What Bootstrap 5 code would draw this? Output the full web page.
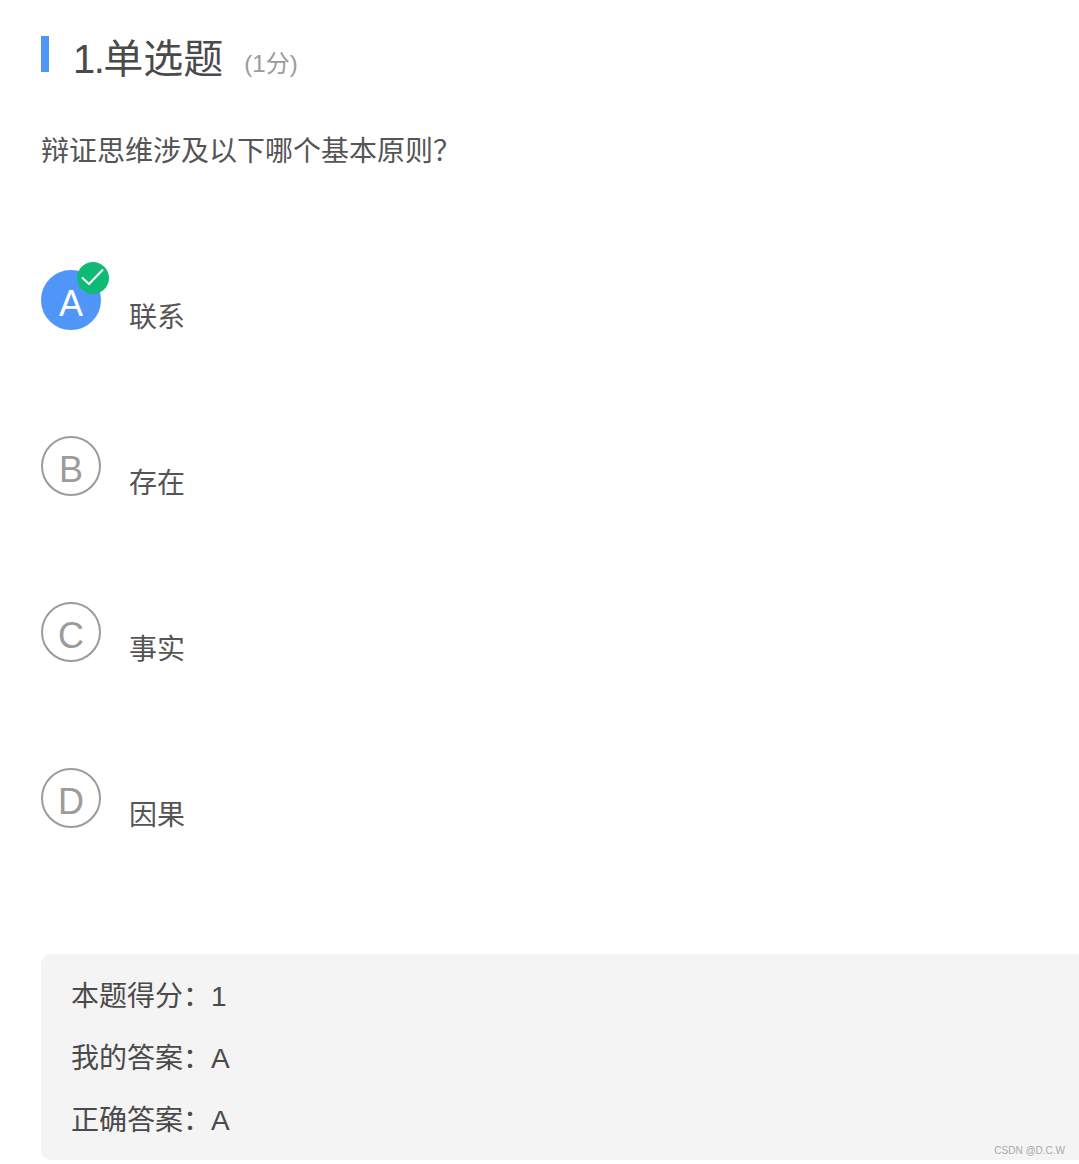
<!DOCTYPE html>
<html lang="zh">
<head>
  <meta charset="UTF-8">
  <meta name="viewport" content="width=device-width, initial-scale=1.0">
  <title>单选题</title>
  <link href="https://cdn.jsdelivr.net/npm/bootstrap@5.3.0/dist/css/bootstrap.min.css" rel="stylesheet">
  <style>
    body {
      font-family: "Liberation Sans", "Noto Sans CJK SC", sans-serif;
      color: #4a4a4a;
      overflow: hidden;
    }
    .quiz-page {
      position: relative;
      height: 1164px;
      padding: 36px 0 0 41px;
    }
    .quiz-title {
      height: 36px;
    }
    .title-bar {
      width: 8px;
      height: 36px;
      background: #5096f8;
      margin-right: 24px;
    }
    .title-text {
      font-size: 40px;
      line-height: 44px;
      margin: 1px 0 0;
      font-weight: 400;
      color: #4a4a4a;
    }
    .title-num {
      letter-spacing: -1.5px;
    }
    .title-score {
      font-size: 24px;
      line-height: 36px;
      margin-left: 21px;
      margin-top: 10px;
      color: #9b9b9b;
    }
    .question-text {
      font-size: 28px;
      line-height: 40px;
      margin: 60px 0 0;
      font-weight: 400;
      color: #555;
    }
    .option-list {
      margin-top: 98px;
      gap: 106px;
    }
    .option-row {
      height: 60px;
    }
    .option-mark {
      position: relative;
      width: 60px;
      height: 60px;
      border: 2px solid #9b9b9b;
      border-radius: 50%;
      padding-top: 7px;
      font-size: 36px;
      color: #9b9b9b;
      flex-shrink: 0;
    }
    .option-mark.is-picked {
      background: #5096f8;
      border-color: #5096f8;
      color: #fff;
    }
    .check-badge {
      position: absolute;
      top: -10px;
      right: -10px;
      width: 32px;
      height: 32px;
    }
    .option-text {
      font-size: 28px;
      font-weight: 400;
      line-height: 40px;
      margin: 28px 0 0 28px;
      color: #555;
    }
    .result-box {
      background: #f4f4f4;
      border-radius: 10px 0 0 10px;
      margin-top: 126px;
      height: 206px;
      padding: 12px 30px;
      font-size: 28px;
      line-height: 62px;
      color: #4a4a4a;
    }
    .watermark {
      position: absolute;
      right: 14px;
      bottom: 6px;
      font-size: 10px;
      line-height: 14px;
      color: #a8a8a8;
    }
  </style>
</head>
<body>
  <div class="quiz-page">
    <div class="quiz-title d-flex align-items-start">
      <div class="title-bar"></div>
      <h1 class="title-text"><span class="title-num">1.</span>单选题</h1>
      <span class="title-score">(1分)</span>
    </div>

    <p class="question-text">辩证思维涉及以下哪个基本原则？</p>

    <div class="option-list d-flex flex-column">
      <div class="option-row d-flex align-items-start">
        <div class="option-mark is-picked d-flex align-items-center justify-content-center">A
          <svg class="check-badge" viewBox="0 0 32 32">
            <circle cx="16" cy="16" r="16" fill="#0fbb74"/>
            <path d="M5 15.5l7 6.5L26 7.5" fill="none" stroke="#fff" stroke-width="2"/>
          </svg>
        </div>
        <div class="option-text">联系</div>
      </div>
      <div class="option-row d-flex align-items-start">
        <div class="option-mark d-flex align-items-center justify-content-center">B</div>
        <div class="option-text">存在</div>
      </div>
      <div class="option-row d-flex align-items-start">
        <div class="option-mark d-flex align-items-center justify-content-center">C</div>
        <div class="option-text">事实</div>
      </div>
      <div class="option-row d-flex align-items-start">
        <div class="option-mark d-flex align-items-center justify-content-center">D</div>
        <div class="option-text">因果</div>
      </div>
    </div>

    <div class="result-box">
      <div>本题得分：1</div>
      <div>我的答案：A</div>
      <div>正确答案：A</div>
    </div>

    <div class="watermark">CSDN @D.C.W</div>
  </div>

  <script src="https://cdn.jsdelivr.net/npm/bootstrap@5.3.0/dist/js/bootstrap.bundle.min.js"></script>
</body>
</html>
